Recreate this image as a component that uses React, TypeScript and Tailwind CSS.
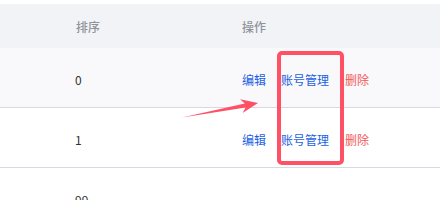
import React from "react";

const rows = [
  { sort: "0", striped: true },
  { sort: "1", striped: false },
  { sort: "99", striped: false },
];

function Actions() {
  return (
    <div className="flex items-center text-[12px]">
      <a className="text-[#1d5fe3] cursor-pointer">编辑</a>
      <a className="ml-[15px] text-[#1d5fe3] cursor-pointer">账号管理</a>
      <a className="ml-[16px] text-[#f25a5a] cursor-pointer">删除</a>
    </div>
  );
}

export default function App() {
  return (
    <div
      className="relative w-[440px] h-[200px] overflow-hidden bg-white pt-[4px]"
      style={{ fontFamily: '"Noto Sans CJK SC", "Noto Sans", sans-serif' }}
    >
      {/* header */}
      <div className="flex items-center h-[44px] pt-[2px] bg-[#f2f3f7] text-[12px] text-[#909399] font-medium">
        <div className="w-[242px] pl-[76px]">排序</div>
        <div className="flex-1">操作</div>
      </div>

      {rows.map((row) => (
        <div
          key={row.sort}
          className={
            "flex items-center h-[60px] pt-[4px] border-b border-[#d5d9e2] text-[12px] text-[#303133] " +
            (row.striped ? "bg-[#f9f9fb]" : "bg-white")
          }
        >
          <div className="w-[242px] pl-[75px]">{row.sort}</div>
          <div className="flex-1">{row.sort !== "99" && <Actions />}</div>
        </div>
      ))}

      {/* annotation: highlight box */}
      <div className="absolute left-[277px] top-[51px] w-[67px] h-[114px] border-4 border-[#ff5066] rounded-[5px] pointer-events-none" />

      {/* annotation: arrow */}
      <svg
        className="absolute left-0 top-0 pointer-events-none"
        width="440"
        height="200"
        viewBox="0 0 440 200"
      >
        <polygon
          points="182,117.5 244.8,103.4 240,99.2 258,103 242.6,113 245.6,107.4"
          fill="#ff5066"
        />
      </svg>
    </div>
  );
}
